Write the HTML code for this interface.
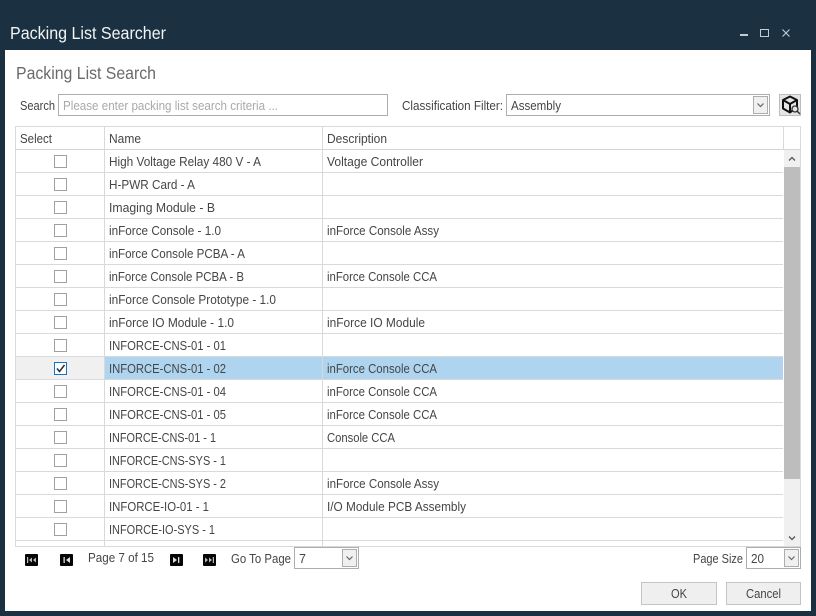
<!DOCTYPE html>
<html><head><meta charset="utf-8"><title>Packing List Searcher</title>
<style>
html,body{margin:0;padding:0;background:#1b3141;width:816px;height:616px;overflow:hidden}
svg{display:block}
text{font-family:"Liberation Sans",sans-serif;font-size:12.5px;fill:#454545}
.h{font-size:17.5px}
</style></head><body>
<svg width="816" height="616" viewBox="0 0 816 616" xmlns="http://www.w3.org/2000/svg">
<rect width="816" height="616" fill="#1b3141"/>
<rect x="5" y="50" width="806" height="561" fill="#fff"/>
<text class="h" x="10" y="39" textLength="156" lengthAdjust="spacingAndGlyphs" style="fill:#f2f4f5">Packing List Searcher</text>
<rect x="740" y="34" width="8" height="2" fill="#c4ccd1"/>
<rect x="760.5" y="29.5" width="8" height="7" fill="none" stroke="#c4ccd1"/>
<path d="M782.5 29.5L789.5 36.5M789.5 29.5L782.5 36.5" stroke="#c4ccd1" stroke-width="1.1" fill="none"/>
<text class="h" x="16" y="79" textLength="140" lengthAdjust="spacingAndGlyphs" style="fill:#6a6a6a">Packing List Search</text>

<text x="20" y="110" textLength="35" lengthAdjust="spacingAndGlyphs">Search</text>
<rect x="58.5" y="94.5" width="329" height="21" fill="#fff" stroke="#adadad"/>
<text x="63" y="110" textLength="215" lengthAdjust="spacingAndGlyphs" style="fill:#a9a9a9">Please enter packing list search criteria ...</text>
<text x="402" y="110" textLength="101" lengthAdjust="spacingAndGlyphs">Classification Filter:</text>
<rect x="506.5" y="94.5" width="263" height="21" fill="#fff" stroke="#adadad"/>
<text x="511" y="110" textLength="50" lengthAdjust="spacingAndGlyphs">Assembly</text>
<rect x="753.5" y="96.5" width="14" height="17" fill="#f0f0f0" stroke="#adadad"/>
<path d="M757.5 103.5L760.5 106.5L763.5 103.5" fill="none" stroke="#666" stroke-width="1.2"/>
<rect x="779.5" y="94.5" width="21" height="21" fill="#e6e6e6" stroke="#bdbdbd"/>
<path d="M783 100L790 96.5L797 100L797 107L790 112.5L783 108.5ZM783 100L790 104L797 100M790 104L790 112.5" fill="none" stroke="#111" stroke-width="2" stroke-linejoin="round"/>
<circle cx="795" cy="109" r="3" fill="#e6e6e6" stroke="#333" stroke-width="1.3"/>
<path d="M797 111L800 114" stroke="#333" stroke-width="1.5"/>

<!-- grid -->
<rect x="15.5" y="126.5" width="785" height="420" fill="#fff" stroke="#d9d9d9"/>
<rect x="15" y="149" width="786" height="1" fill="#d4d4d4"/>
<rect x="16" y="357" width="88" height="22" fill="#f0f0f0"/>
<rect x="105" y="357" width="678" height="22" fill="#aed4ef"/>
<g fill="#d9d9d9">
<rect x="16" y="172" width="767" height="1"/><rect x="16" y="195" width="767" height="1"/><rect x="16" y="218" width="767" height="1"/><rect x="16" y="241" width="767" height="1"/><rect x="16" y="264" width="767" height="1"/><rect x="16" y="287" width="767" height="1"/><rect x="16" y="310" width="767" height="1"/><rect x="16" y="333" width="767" height="1"/><rect x="16" y="356" width="767" height="1"/><rect x="16" y="379" width="767" height="1"/><rect x="16" y="402" width="767" height="1"/><rect x="16" y="425" width="767" height="1"/><rect x="16" y="448" width="767" height="1"/><rect x="16" y="471" width="767" height="1"/><rect x="16" y="494" width="767" height="1"/><rect x="16" y="517" width="767" height="1"/><rect x="16" y="540" width="767" height="1"/>
<rect x="104" y="127" width="1" height="419"/><rect x="322" y="127" width="1" height="419"/><rect x="783" y="127" width="1" height="23"/>
</g>
<rect x="784" y="150" width="16" height="396" fill="#f0f0f0"/>
<rect x="784" y="167" width="16" height="312" fill="#bdbdbd"/>
<path d="M789 160.5L792 157.5L795 160.5" fill="none" stroke="#555" stroke-width="1.3"/>
<path d="M789 536.5L792 539.5L795 536.5" fill="none" stroke="#555" stroke-width="1.3"/>

<text x="20" y="143" textLength="32" lengthAdjust="spacingAndGlyphs">Select</text>
<text x="109" y="143" textLength="32" lengthAdjust="spacingAndGlyphs">Name</text>
<text x="327" y="143" textLength="60" lengthAdjust="spacingAndGlyphs">Description</text>

<g fill="#fff" stroke="#a0a0a0">
<rect x="54.5" y="155.5" width="12" height="12"/><rect x="54.5" y="178.5" width="12" height="12"/><rect x="54.5" y="201.5" width="12" height="12"/><rect x="54.5" y="224.5" width="12" height="12"/><rect x="54.5" y="247.5" width="12" height="12"/><rect x="54.5" y="270.5" width="12" height="12"/><rect x="54.5" y="293.5" width="12" height="12"/><rect x="54.5" y="316.5" width="12" height="12"/><rect x="54.5" y="339.5" width="12" height="12"/>
<rect x="54.5" y="385.5" width="12" height="12"/><rect x="54.5" y="408.5" width="12" height="12"/><rect x="54.5" y="431.5" width="12" height="12"/><rect x="54.5" y="454.5" width="12" height="12"/><rect x="54.5" y="477.5" width="12" height="12"/><rect x="54.5" y="500.5" width="12" height="12"/><rect x="54.5" y="523.5" width="12" height="12"/>
</g>
<rect x="54.5" y="362.5" width="12" height="12" fill="#fff" stroke="#0a78d2"/>
<path d="M57 368.5L59.5 371.5L64.5 365" fill="none" stroke="#333" stroke-width="1.6"/>

<text x="109" y="166" textLength="152" lengthAdjust="spacingAndGlyphs">High Voltage Relay 480 V - A</text>
<text x="109" y="189" textLength="86" lengthAdjust="spacingAndGlyphs">H-PWR Card - A</text>
<text x="109" y="212" textLength="106" lengthAdjust="spacingAndGlyphs">Imaging Module - B</text>
<text x="109" y="235" textLength="112" lengthAdjust="spacingAndGlyphs">inForce Console - 1.0</text>
<text x="109" y="258" textLength="136" lengthAdjust="spacingAndGlyphs">inForce Console PCBA - A</text>
<text x="109" y="281" textLength="135" lengthAdjust="spacingAndGlyphs">inForce Console PCBA - B</text>
<text x="109" y="304" textLength="167" lengthAdjust="spacingAndGlyphs">inForce Console Prototype - 1.0</text>
<text x="109" y="327" textLength="125" lengthAdjust="spacingAndGlyphs">inForce IO Module - 1.0</text>
<text x="109" y="350" textLength="117" lengthAdjust="spacingAndGlyphs">INFORCE-CNS-01 - 01</text>
<text x="109" y="373" textLength="117" lengthAdjust="spacingAndGlyphs">INFORCE-CNS-01 - 02</text>
<text x="109" y="396" textLength="117" lengthAdjust="spacingAndGlyphs">INFORCE-CNS-01 - 04</text>
<text x="109" y="419" textLength="117" lengthAdjust="spacingAndGlyphs">INFORCE-CNS-01 - 05</text>
<text x="109" y="442" textLength="107" lengthAdjust="spacingAndGlyphs">INFORCE-CNS-01 - 1</text>
<text x="109" y="465" textLength="117" lengthAdjust="spacingAndGlyphs">INFORCE-CNS-SYS - 1</text>
<text x="109" y="488" textLength="117" lengthAdjust="spacingAndGlyphs">INFORCE-CNS-SYS - 2</text>
<text x="109" y="511" textLength="100" lengthAdjust="spacingAndGlyphs">INFORCE-IO-01 - 1</text>
<text x="109" y="534" textLength="106" lengthAdjust="spacingAndGlyphs">INFORCE-IO-SYS - 1</text>

<text x="327" y="166" textLength="96" lengthAdjust="spacingAndGlyphs">Voltage Controller</text>
<text x="327" y="235" textLength="112" lengthAdjust="spacingAndGlyphs">inForce Console Assy</text>
<text x="327" y="281" textLength="110" lengthAdjust="spacingAndGlyphs">inForce Console CCA</text>
<text x="327" y="327" textLength="98" lengthAdjust="spacingAndGlyphs">inForce IO Module</text>
<text x="327" y="373" textLength="110" lengthAdjust="spacingAndGlyphs">inForce Console CCA</text>
<text x="327" y="396" textLength="110" lengthAdjust="spacingAndGlyphs">inForce Console CCA</text>
<text x="327" y="419" textLength="110" lengthAdjust="spacingAndGlyphs">inForce Console CCA</text>
<text x="327" y="442" textLength="68" lengthAdjust="spacingAndGlyphs">Console CCA</text>
<text x="327" y="488" textLength="112" lengthAdjust="spacingAndGlyphs">inForce Console Assy</text>
<text x="327" y="511" textLength="139" lengthAdjust="spacingAndGlyphs">I/O Module PCB Assembly</text>

<!-- pager -->
<rect x="25" y="554" width="13" height="12" rx="1" fill="#050505"/>
<path d="M27 557h1.2v6H27zM32 557.5v5l-3-2.5zM36 557.5v5l-3-2.5z" fill="#bbb"/>
<rect x="60" y="554" width="13" height="12" rx="1" fill="#050505"/>
<path d="M63.5 557h1.3v6h-1.3zM70 557v6l-4-3z" fill="#ddd"/>
<rect x="170" y="554" width="13" height="12" rx="1" fill="#050505"/>
<path d="M173 557v6l4-3zM178 557h1.3v6H178z" fill="#ddd"/>
<rect x="203" y="554" width="13" height="12" rx="1" fill="#050505"/>
<path d="M205 557.5v5l3-2.5zM209 557.5v5l3-2.5zM212.8 557h1.2v6h-1.2z" fill="#bbb"/>
<text x="88" y="562" textLength="66" lengthAdjust="spacingAndGlyphs">Page 7 of 15</text>
<text x="231" y="563" textLength="60" lengthAdjust="spacingAndGlyphs">Go To Page</text>
<rect x="294.5" y="547.5" width="64" height="21" fill="#fff" stroke="#adadad"/>
<text x="299" y="563">7</text>
<rect x="342.5" y="549.5" width="14" height="17" fill="#f0f0f0" stroke="#adadad"/>
<path d="M346.5 556.5L349.5 559.5L352.5 556.5" fill="none" stroke="#666" stroke-width="1.2"/>
<text x="693" y="563" textLength="50" lengthAdjust="spacingAndGlyphs">Page Size</text>
<rect x="746.5" y="547.5" width="54" height="21" fill="#fff" stroke="#adadad"/>
<text x="751" y="563" textLength="13" lengthAdjust="spacingAndGlyphs">20</text>
<rect x="784.5" y="549.5" width="14" height="17" fill="#f0f0f0" stroke="#adadad"/>
<path d="M788.5 556.5L791.5 559.5L794.5 556.5" fill="none" stroke="#666" stroke-width="1.2"/>

<rect x="641.5" y="582.5" width="75" height="22" fill="#efefef" stroke="#c4c4c4"/>
<text x="671" y="598" textLength="16" lengthAdjust="spacingAndGlyphs">OK</text>
<rect x="726.5" y="582.5" width="74" height="22" fill="#efefef" stroke="#c4c4c4"/>
<text x="746" y="598" textLength="35" lengthAdjust="spacingAndGlyphs">Cancel</text>
</svg>
</body></html>
